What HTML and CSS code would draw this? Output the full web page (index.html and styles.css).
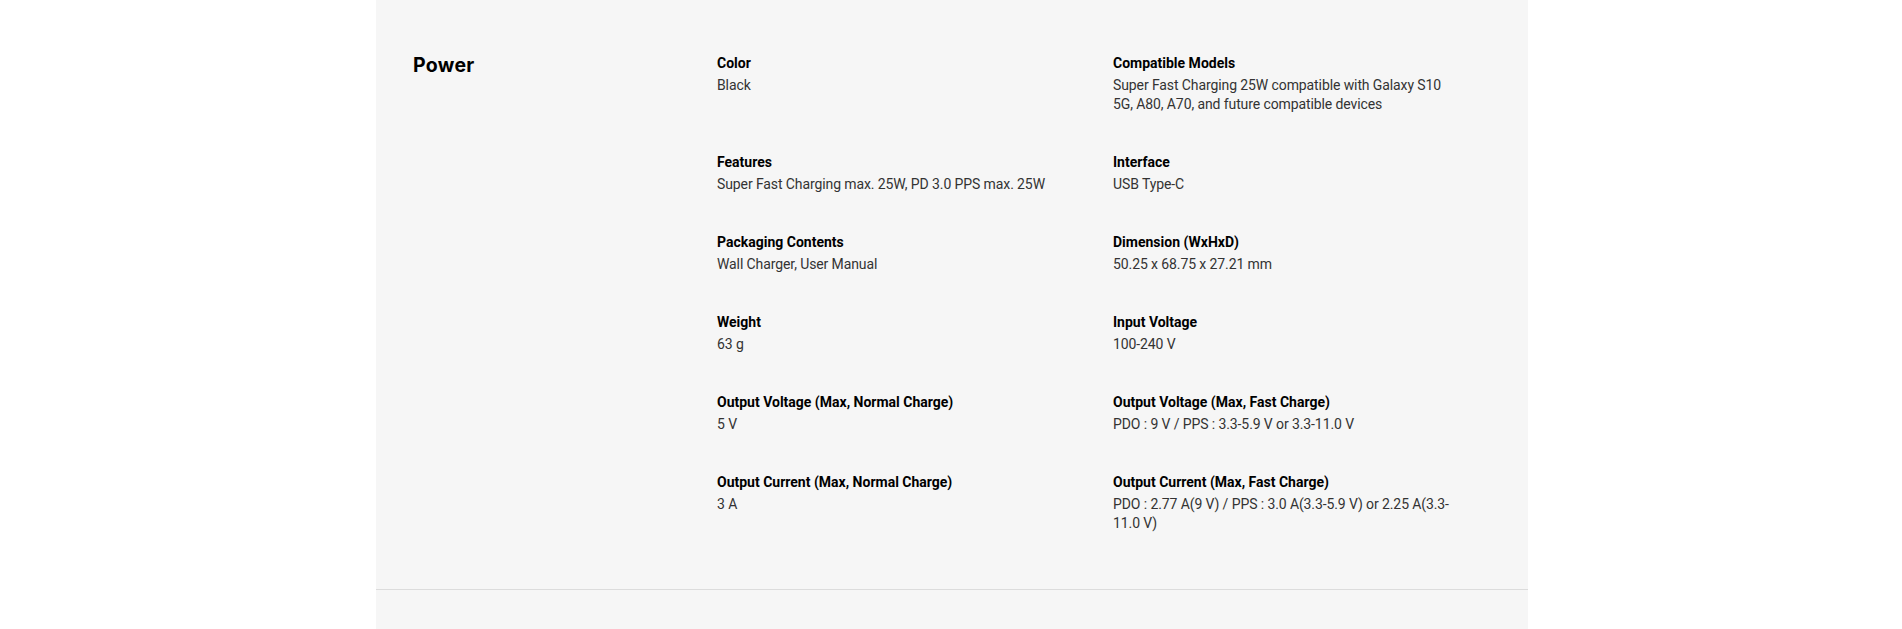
FILE: index.html
```html
<!DOCTYPE html>
<html lang="en">
<head>
<meta charset="utf-8">
<title>Specs</title>
<link rel="stylesheet" href="styles.css">
</head>
<body>
<div class="page">
  <section class="spec-section">
    <h2 class="spec-title">Power</h2>
    <dl class="spec-grid">
      <div class="spec-item"><dt>Color</dt><dd>Black</dd></div>
      <div class="spec-item"><dt>Compatible Models</dt><dd>Super Fast Charging 25W compatible with Galaxy S10 5G, A80, A70, and future compatible devices</dd></div>
      <div class="spec-item"><dt>Features</dt><dd>Super Fast Charging max. 25W, PD 3.0 PPS max. 25W</dd></div>
      <div class="spec-item"><dt>Interface</dt><dd>USB Type-C</dd></div>
      <div class="spec-item"><dt>Packaging Contents</dt><dd>Wall Charger, User Manual</dd></div>
      <div class="spec-item"><dt>Dimension (WxHxD)</dt><dd>50.25 x 68.75 x 27.21 mm</dd></div>
      <div class="spec-item"><dt>Weight</dt><dd>63 g</dd></div>
      <div class="spec-item"><dt>Input Voltage</dt><dd>100-240 V</dd></div>
      <div class="spec-item"><dt>Output Voltage (Max, Normal Charge)</dt><dd>5 V</dd></div>
      <div class="spec-item"><dt>Output Voltage (Max, Fast Charge)</dt><dd>PDO : 9 V / PPS : 3.3-5.9 V or 3.3-11.0 V</dd></div>
      <div class="spec-item"><dt>Output Current (Max, Normal Charge)</dt><dd>3 A</dd></div>
      <div class="spec-item"><dt>Output Current (Max, Fast Charge)</dt><dd>PDO : 2.77 A(9 V) / PPS : 3.0 A(3.3-5.9 V) or 2.25 A(3.3-11.0 V)</dd></div>
    </dl>
  </section>
  <div class="next-section"></div>
</div>
</body>
</html>
```
FILE: styles.css
```css
* { box-sizing: border-box; }
html, body { margin: 0; padding: 0; background: #ffffff; }
body {
  padding-left: 2px;
  font-family: Roboto, "Liberation Sans", Arial, sans-serif;
  color: #000;
}

.page {
  width: 1152px;
  margin: 0 auto;
  background: #f6f6f6;
}

.spec-section {
  display: grid;
  grid-template-columns: 304px 1fr;
  padding: 53px 0 56px 37px;
  border-bottom: 1px solid #dcdcdc;
}

.spec-title {
  margin: 0;
  font-family: Inter, "Liberation Sans", sans-serif;
  font-weight: 700;
  font-size: 19.5px;
  line-height: 24px;
  letter-spacing: 0.3px;
  color: #000;
}

.spec-grid {
  margin: 0;
  display: grid;
  grid-template-columns: 350px 350px;
  column-gap: 46px;
  row-gap: 38px;
  align-items: start;
}

.spec-item dt {
  font-size: 14px;
  font-weight: 700;
  line-height: 20px;
  margin-bottom: 3px;
  color: #000;
}

.spec-item dd {
  margin: 0;
  font-size: 14px;
  font-weight: 400;
  line-height: 19px;
  letter-spacing: -0.1px;
  color: #333;
}

.next-section {
  height: 39px;
}
```
